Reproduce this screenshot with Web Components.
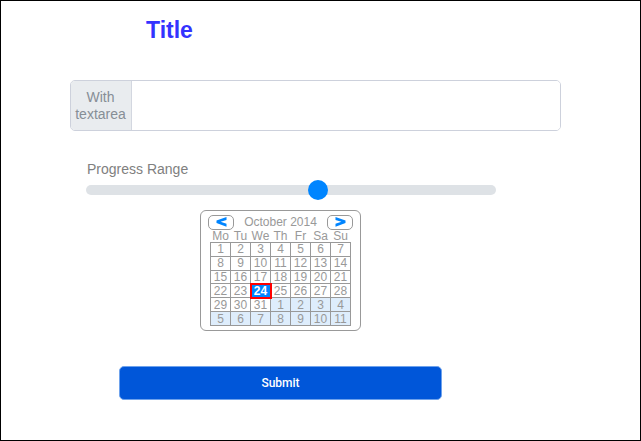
<!DOCTYPE html>
<html lang="en">
<head>
<meta charset="utf-8">
<meta name="viewport" content="width=device-width, initial-scale=1">
<title>Title</title>
<style>
*{box-sizing:border-box}
body{margin:0;font-family:"Liberation Sans",Arial,sans-serif;background:#fff}
</style>
</head>
<body>
<form-page>
  <page-title slot="title">Title</page-title>
  <text-group>With textarea</text-group>
  <progress-range value="57">Progress Range</progress-range>
  <month-calendar month="October 2014" days="31" selected="24"></month-calendar>
  <submit-button>Submit</submit-button>
</form-page>
<script>
const define = (name, html, setup) => {
  const tpl = document.createElement('template');
  tpl.innerHTML = '<style>*{box-sizing:border-box}</style>' + html;
  customElements.define(name, class extends HTMLElement {
    constructor() {
      super();
      this.attachShadow({mode: 'open'}).append(tpl.content.cloneNode(true));
    }
    connectedCallback() { if (setup) setup(this, this.shadowRoot); }
  });
};

define('form-page', `
<style>
:host{display:block;box-sizing:border-box;min-height:100vh;border:1px solid #000;padding:15px 79px 24px 69px}
main{display:flex;flex-direction:column}
</style>
<main><slot name="title"></slot><slot></slot></main>`);

define('page-title', `
<style>
:host{display:block;padding-left:76px}
h1{margin:0;font-size:23px;line-height:28px;font-weight:700;color:#3333ff}
</style>
<h1><slot></slot></h1>`);

define('text-group', `
<style>
:host{display:block;margin-top:36px}
div{display:flex;border:1px solid #cdd1dc;border-radius:5px;overflow:hidden}
label{flex:none;width:61px;padding:8px 1px 7px 0;text-align:center;font-size:14px;line-height:17px;color:#868e96;background:#e9ecef;border-right:1px solid #d3d7e0}
textarea{flex:1;min-width:0;height:49px;border:0;padding:6px 12px;resize:none;outline:0;background:#fff;font:14px/17px "Liberation Sans",Arial,sans-serif;color:#495057}
</style>
<div><label for="text"><slot></slot></label><textarea id="text"></textarea></div>`);

define('progress-range', `
<style>
:host{display:flex;flex-direction:column;margin:30px 65px 0 16px}
label{padding-left:1px;font-size:14px;line-height:16px;color:#808080}
input{-webkit-appearance:none;appearance:none;width:100%;height:20px;margin:3px 0 0;background:transparent}
input::-webkit-slider-runnable-track{height:10px;border-radius:5px;background:#dee2e6}
input::-webkit-slider-thumb{-webkit-appearance:none;width:20px;height:20px;margin-top:-5px;border-radius:50%;background:#0085ff}
input::-moz-range-track{height:10px;border-radius:5px;background:#dee2e6}
input::-moz-range-thumb{width:20px;height:20px;border:0;border-radius:50%;background:#0085ff}
</style>
<label for="range"><slot></slot></label><input id="range" type="range" min="0" max="100">`,
(host, root) => { root.querySelector('input').value = host.getAttribute('value'); });

define('month-calendar', `
<style>
:host{display:block;align-self:center;margin:10px 70px 0 0;padding:4px 7px;border:1px solid #999;border-radius:6px;width:161px;font-size:12px;color:#999;box-sizing:border-box}
header{display:flex;justify-content:space-between;align-items:center;height:15px;line-height:13px}
button{display:flex;align-items:center;justify-content:center;width:26px;height:15px;padding:0;border:1px solid #999;border-radius:5px;background:#fff}
svg{display:block;width:11px;height:11px;fill:#0085ff}
table{border-collapse:collapse;table-layout:fixed;width:141px;height:96px;margin:0 auto}
th,td{padding:0;text-align:center;line-height:12px}
th{font-weight:400}
td{border:1px solid #999}
.next{background:#deedfc}
.selected{background:#0085ff;color:#fff;font-weight:700;outline:2px solid #f00;outline-offset:-1px}
</style>
<header>
<button type="button" aria-label="Previous month"><svg viewBox="0 0 11 11"><path d="M10.5 0V3L4.6 4.8 10.5 6.8V9.8L.5 6V3.6Z"/></svg></button>
<span></span>
<button type="button" aria-label="Next month"><svg viewBox="0 0 11 11"><path d="M.5 0V3L6.4 4.8 .5 6.8V9.8L10.5 6V3.6Z"/></svg></button>
</header>
<table><thead><tr></tr></thead><tbody></tbody></table>`,
(host, root) => {
  const days = +host.getAttribute('days'), selected = +host.getAttribute('selected');
  root.querySelector('span').textContent = host.getAttribute('month');
  root.querySelector('thead tr').innerHTML =
    ['Mo','Tu','We','Th','Fr','Sa','Su'].map(d => '<th scope="col">' + d + '</th>').join('');
  let rows = '';
  for (let w = 0; w < 6; w++) {
    rows += '<tr>';
    for (let d = 1; d <= 7; d++) {
      const n = w * 7 + d;
      const cls = n > days ? 'next' : n === selected ? 'selected' : '';
      rows += '<td class="' + cls + '">' + (n > days ? n - days : n) + '</td>';
    }
    rows += '</tr>';
  }
  root.querySelector('tbody').innerHTML = rows;
});

define('submit-button', `
<style>
:host{display:block;margin:35px 119px 0 49px}
button{display:block;width:100%;height:34px;padding:0;border:1px solid #6ea2ec;border-radius:5px;background:#0056d9;color:#fff;font:500 12px/16px Roboto,"Liberation Sans",sans-serif}
</style>
<button type="submit"><slot></slot></button>`);
</script>
</body>
</html>
